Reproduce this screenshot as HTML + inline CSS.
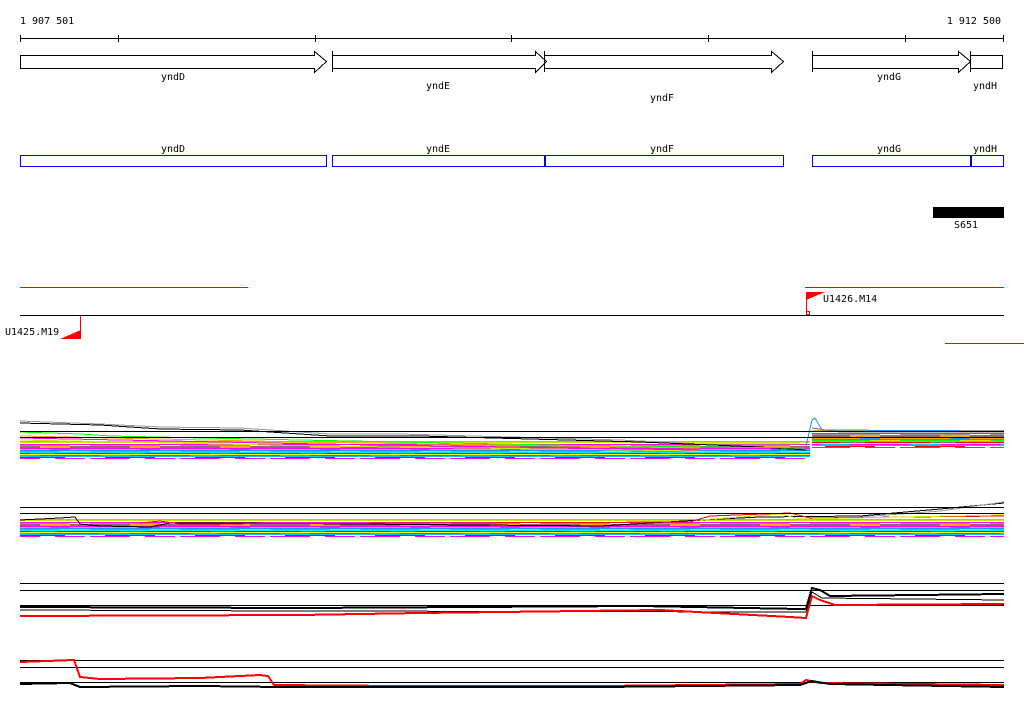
<!DOCTYPE html>
<html><head><meta charset="utf-8"><style>
html,body{margin:0;padding:0;background:#fff;width:1024px;height:714px;overflow:hidden}
svg{display:block}
text{font-family:"DejaVu Sans Mono","Liberation Mono",monospace;font-size:10px;fill:#000}
</style></head><body>
<svg width="1024" height="714" viewBox="0 0 1024 714" xmlns="http://www.w3.org/2000/svg" shape-rendering="crispEdges">
<defs>
<g id="stripes">
<rect width="90" height="24" fill="#fff"/>
<rect y="0" width="90" height="1" fill="#ffa500"/><rect y="1" width="90" height="1" fill="#c8e600"/>
<rect y="3" width="90" height="1" fill="#ff00ff"/><rect y="4" width="70" height="1" fill="#999"/>
<rect y="5" width="90" height="2" fill="#8b6b6b"/><rect x="40" y="5" width="30" height="2" fill="#ffa500"/>
<rect y="7" width="90" height="1" fill="#ff00ff"/>
<rect y="8" width="90" height="1" fill="#ffa500"/><rect x="50" y="8" width="20" height="1" fill="#1e90ff"/>
<rect y="9" width="90" height="1" fill="#1e90ff"/>
<rect y="10" width="60" height="1" fill="#00ff00"/><rect x="60" y="10" width="30" height="1" fill="#c8e600"/>
<rect y="11" width="90" height="1" fill="#00e5ee"/>
<rect y="12" width="90" height="1" fill="#ff0000"/><rect x="30" y="12" width="25" height="1" fill="#8b6b6b"/>
<rect y="13" width="90" height="1" fill="#ffff00"/>
<rect y="14" width="90" height="1" fill="#ff00ff"/><rect x="10" y="14" width="30" height="1" fill="#00bfff"/>
<rect y="15" width="90" height="1" fill="#00bfff"/>
<rect x="15" y="16" width="50" height="1" fill="#ff0000"/><rect x="0" y="17" width="40" height="1" fill="#ff00ff"/>
<rect x="55" y="17" width="30" height="1" fill="#ff00ff"/>
</g>
<pattern id="pa" x="0" y="441" width="90" height="24" patternUnits="userSpaceOnUse"><use href="#stripes"/></pattern>
<pattern id="pb" x="0" y="430" width="90" height="24" patternUnits="userSpaceOnUse"><use href="#stripes"/></pattern>
<pattern id="pc" x="0" y="519" width="90" height="24" patternUnits="userSpaceOnUse"><use href="#stripes"/></pattern>
</defs>
<text x="20" y="24">1 907 501</text>
<text x="1001" y="24" text-anchor="end">1 912 500</text>
<g stroke="#000" stroke-width="1" fill="none">
<line x1="20" y1="38.5" x2="1004" y2="38.5"/>
<path d="M20.5 35v7M118.5 35v7M315.5 35v7M511.5 35v7M708.5 35v7M905.5 35v7M1003.5 35v7"/>
<path d="M20.5 55.5H314.5V51.5L326.5 61.5L314.5 72.5V68.5H20.5Z" fill="#fff"/>
<path d="M332.5 51v21M332.5 55.5H535.5V51.5L546.5 61.5L535.5 72.5V68.5H332.5"/>
<path d="M544.5 51v21M544.5 55.5H771.5V51.5L783.5 61.5L771.5 72.5V68.5H544.5"/>
<path d="M812.5 51v21M812.5 55.5H958.5V51.5L970.5 61.5L958.5 72.5V68.5H812.5"/>
<path d="M970.5 51v21M970.5 55.5H1002.5V68.5H970.5"/>
</g>
<text x="173" y="80" text-anchor="middle">yndD</text>
<text x="438" y="89" text-anchor="middle">yndE</text>
<text x="662" y="101" text-anchor="middle">yndF</text>
<text x="889" y="80" text-anchor="middle">yndG</text>
<text x="985" y="89" text-anchor="middle">yndH</text>
<g stroke="#0000ee" fill="none">
<rect x="20.5" y="155.5" width="306" height="11"/>
<rect x="332.5" y="155.5" width="212" height="11"/>
<rect x="545.5" y="155.5" width="238" height="11"/>
<rect x="812.5" y="155.5" width="158" height="11"/>
<rect x="971.5" y="155.5" width="32" height="11"/>
<line x1="970.5" y1="155" x2="970.5" y2="167"/>
</g>
<text x="173" y="152" text-anchor="middle">yndD</text>
<text x="438" y="152" text-anchor="middle">yndE</text>
<text x="662" y="152" text-anchor="middle">yndF</text>
<text x="889" y="152" text-anchor="middle">yndG</text>
<text x="985" y="152" text-anchor="middle">yndH</text>
<rect x="933" y="207" width="71" height="11" fill="#000"/>
<text x="966" y="228" text-anchor="middle">S651</text>
<rect x="20" y="287" width="228" height="1" fill="#f00"/>
<rect x="805" y="287" width="199" height="1" fill="#f00"/>
<rect x="945" y="343" width="79" height="1" fill="#f00"/>
<rect x="806" y="292" width="1" height="23" fill="#f00"/>
<rect x="80" y="315" width="1" height="24" fill="#f00"/>
<rect x="806.5" y="311.5" width="3" height="3" stroke="#f00" fill="none"/>
<polygon points="806,292 825,292 806,300" fill="#f00"/>
<polygon points="60,339 81,339 81,330" fill="#f00"/>
<rect x="20" y="315" width="984" height="1" fill="#000"/>
<text x="823" y="302">U1426.M14</text>
<text x="5" y="335">U1425.M19</text>
<!-- track 1 -->
<rect x="20" y="441" width="790" height="20" fill="url(#pa)"/>
<rect x="812" y="430" width="192" height="24" fill="url(#pb)"/>
<g fill="none" stroke-width="1">
<polyline stroke="#999" points="20,421 100,424 160,427 240,428 330,434 400,434 620,440 700,444 800,444"/>
<polyline stroke="#000" points="20,423 100,425 160,429 240,430 330,436 420,436 640,442 760,447 806,450"/>
<polyline stroke="#00ff00" points="20,432 80,434 110,436 300,440 600,446 806,448"/>
<polyline stroke="#ffa500" points="20,436 300,442 700,448"/>
<polyline stroke="#ff00ff" points="20,438 320,444 700,450"/>
<polyline stroke="#c8e600" points="20,440 320,446 700,451"/>
<polyline stroke="#1e90ff" points="806,446 812,420 815,418 818,423 822,430 1004,431"/>
<polyline stroke="#8b6b6b" points="812,428 840,432 1004,432"/>
</g>
<g fill="#000"><rect x="20" y="431" width="984" height="1"/><rect x="20" y="437" width="984" height="1"/></g>
<!-- track 2 -->
<rect x="20" y="519" width="984" height="20" fill="url(#pc)"/>
<g fill="none">
<polyline stroke="#000" points="20,520 60,518 75,517 80,524 100,526 150,527 170,523 230,523 600,526 700,520 760,517 860,516 940,509 1004,503"/>
<polyline stroke="#999" points="860,517 940,511 1004,502"/>
<polyline stroke="#f00" points="140,523 160,521 180,524 690,522 710,516 790,513 810,518 1004,516"/>
<polyline stroke="#c8e600" points="700,520 780,514 800,519 1004,515"/>
</g>
<g fill="#000"><rect x="20" y="507" width="984" height="1"/><rect x="20" y="513" width="984" height="1"/></g>
<!-- track 3 -->
<g fill="#000"><rect x="20" y="583" width="984" height="1"/><rect x="20" y="590" width="984" height="1"/><rect x="20" y="605" width="984" height="1"/></g>
<g fill="none">
<polyline stroke="#000" stroke-width="2" points="20,607 300,608 640,606 800,609 806,609 812,588 820,590 830,596 1004,594"/>
<polyline stroke="#000" points="20,610 300,611 800,612 806,612 812,592 822,598 1004,600"/>
<polyline stroke="#f00" stroke-width="2" points="20,616 300,615 420,613 660,610 790,617 806,618 812,596 820,600 835,605 1004,604"/>
</g>
<!-- track 4 -->
<g fill="#000"><rect x="20" y="660" width="984" height="1"/><rect x="20" y="667" width="984" height="1"/><rect x="20" y="682" width="984" height="1"/></g>
<g fill="none">
<polyline stroke="#f00" stroke-width="2" points="20,662 74,660 80,677 100,679 200,678 260,675 268,676 274,685 400,686 600,686 800,684 806,680 820,683 1004,685"/>
<polyline stroke="#000" stroke-width="2" points="20,684 70,683 80,687 200,686 280,687 600,687 800,685 812,681 830,684 1004,687"/>
</g>
</svg>
</body></html>
